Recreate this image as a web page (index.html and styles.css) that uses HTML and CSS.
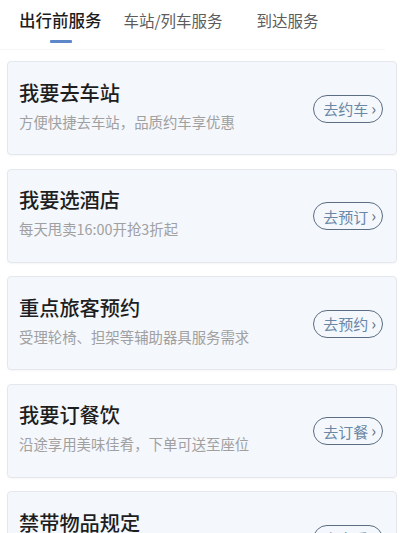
FILE: index.html
```html
<!DOCTYPE html>
<html lang="zh-CN">
<head>
<meta charset="utf-8">
<link rel="stylesheet" href="styles.css">
</head>
<body>
<div class="page">
  <nav class="tabs">
    <div class="tab active">出行前服务<span class="bar"></span></div>
    <div class="tab t2">车站/列车服务</div>
    <div class="tab t3">到达服务</div>
  </nav>
  <div class="list">
    <div class="card">
      <div class="info"><div class="title">我要去车站</div><div class="sub">方便快捷去车站，品质约车享优惠</div></div>
      <div class="btn">去约车<span class="chev">›</span></div>
    </div>
    <div class="card">
      <div class="info"><div class="title">我要选酒店</div><div class="sub">每天甩卖16:00开抢3折起</div></div>
      <div class="btn">去预订<span class="chev">›</span></div>
    </div>
    <div class="card">
      <div class="info"><div class="title">重点旅客预约</div><div class="sub">受理轮椅、担架等辅助器具服务需求</div></div>
      <div class="btn">去预约<span class="chev">›</span></div>
    </div>
    <div class="card">
      <div class="info"><div class="title">我要订餐饮</div><div class="sub">沿途享用美味佳肴，下单可送至座位</div></div>
      <div class="btn">去订餐<span class="chev">›</span></div>
    </div>
    <div class="card">
      <div class="info"><div class="title">禁带物品规定</div><div class="sub">了解禁止和限制携带的物品</div></div>
      <div class="btn">去查看<span class="chev">›</span></div>
    </div>
  </div>
</div>
</body>
</html>
```
FILE: styles.css
```css
html, body {
  margin: 0;
  padding: 0;
  background: #ffffff;
  overflow: hidden;
}
body {
  font-family: "Noto Sans CJK SC", "Noto Sans", sans-serif;
  width: 413px;
  height: 533px;
}
.page {
  width: 413px;
}
.tabs {
  display: flex;
  height: 50px;
  padding-left: 19px;
  box-sizing: border-box;
  border-bottom: 1px solid #f6f6f6;
  margin-right: 28px;
}
.tab {
  position: relative;
  font-size: 15.5px;
  line-height: 22px;
  padding-top: 9px;
  color: #5c5c5c;
  white-space: nowrap;
}
.tab.active {
  font-size: 16.5px;
  font-weight: 500;
  color: #1c1c1c;
}
.tab.t2 { margin-left: 22px; }
.tab.t3 { margin-left: 34px; }
.bar {
  position: absolute;
  left: 31px;
  top: 40px;
  width: 22px;
  height: 3px;
  border-radius: 1px;
  background: #5d87c8;
}
.list {
  display: flex;
  flex-direction: column;
  gap: 13.5px;
  padding: 11px 16px 0 7px;
}
.card {
  height: 94px;
  box-sizing: border-box;
  background: #f4f7fc;
  border: 1px solid #e4e8ee;
  border-radius: 4px;
  box-shadow: 0 1px 2px rgba(0, 0, 0, 0.04);
  display: flex;
  align-items: center;
  justify-content: space-between;
  padding: 0 13px 0 11px;
}
.info {
  display: flex;
  flex-direction: column;
  gap: 5px;
  margin-bottom: 6px;
}
.title {
  font-size: 20.2px;
  line-height: 28px;
  font-weight: 500;
  color: #1e1e1e;
}
.sub {
  font-size: 14.4px;
  line-height: 20px;
  color: #a0a0a0;
}
.btn {
  height: 28px;
  box-sizing: border-box;
  border: 1px solid #5b6d82;
  border-radius: 14px;
  padding: 0 6px 0 9px;
  display: flex;
  align-items: center;
  font-size: 15px;
  color: #6a87a6;
  margin-top: 1px;
}
.chev {
  font-size: 16px;
  margin-left: 3px;
  color: #5f6f82;
  line-height: 1;
  padding-bottom: 2px;
}
```
